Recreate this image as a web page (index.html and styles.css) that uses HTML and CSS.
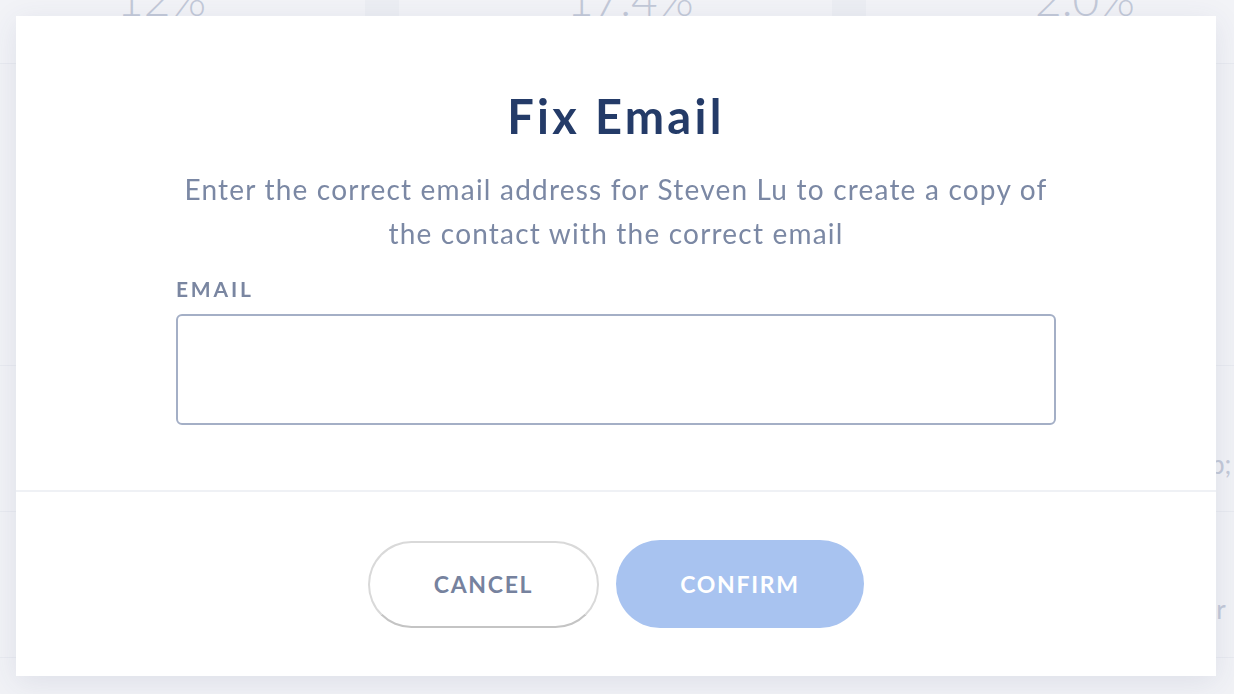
FILE: index.html
```html
<!DOCTYPE html>
<html>
<head>
<meta charset="utf-8">
<link rel="stylesheet" href="styles.css">
</head>
<body>
<div class="page">
  <div class="stats">
    <div class="stat s1">12%</div>
    <div class="stat s2">17.4%</div>
    <div class="stat s3">2.0%</div>
  </div>
  <div class="row r1"><div></div><div class="peek"></div></div>
  <div class="row r2"><div></div><div class="peek">p;</div></div>
  <div class="row r3"><div></div><div class="peek">ir</div></div>
  <div class="row r4"><div></div><div class="peek"></div></div>
</div>

<div class="modal">
  <div class="modal-body">
    <h1 class="title">Fix Email</h1>
    <p class="desc">Enter the correct email address for Steven Lu to create a copy of<br>the contact with the correct email</p>
    <div class="field">
      <label class="label">EMAIL</label>
      <input class="input" type="text">
    </div>
  </div>
  <div class="modal-footer">
    <button class="btn btn-cancel">CANCEL</button>
    <button class="btn btn-confirm">CONFIRM</button>
  </div>
</div>
</body>
</html>
```

FILE: styles.css
```css
* { box-sizing: border-box; }
html, body { margin: 0; padding: 0; }
body {
  width: 1234px;
  height: 694px;
  overflow: hidden;
  background: #f1f2f6;
  font-family: Lato, "Noto Sans", sans-serif;
}
.page { width: 1234px; }
.stats {
  display: grid;
  grid-template-columns: 365px 433px 1fr;
  column-gap: 34px;
  background: #eceef3;
  height: 64px;
  border-bottom: 1px solid #e8eaf0;
  overflow: hidden;
}
.stat {
  background: #f2f3f7;
  font-size: 46px;
  line-height: 46px;
  font-weight: 300;
  color: #c3c9d8;
  white-space: nowrap;
  margin-top: -24px;
  height: 88px;
}
.s1 { padding-left: 117px; }
.s2 { padding-left: 168px; }
.s3 { padding-left: 169px; }

.row {
  display: grid;
  grid-template-columns: 1210px 1fr;
  border-bottom: 1px solid #e8eaf0;
  align-items: center;
  overflow: hidden;
}
.r1 { height: 302px; }
.r2 { height: 146px; }
.r3 { height: 146px; }
.r4 { height: 40px; border-bottom: none; }
.peek {
  font-size: 26px;
  color: #c3c9d8;
  white-space: nowrap;
}
.r2 .peek { margin-top: 50px; }
.r3 .peek { margin-top: 48px; }

.modal {
  position: fixed;
  top: 16px;
  left: 16px;
  width: 1200px;
  height: 660px;
  background: #ffffff;
  box-shadow: 0 6px 28px rgba(60, 72, 120, 0.10);
  display: flex;
  flex-direction: column;
}
.modal-body {
  height: 476px;
  display: flex;
  flex-direction: column;
  align-items: center;
  border-bottom: 2px solid #eff1f5;
}
.title {
  margin: 73px 0 0;
  font-size: 47px;
  line-height: 54px;
  font-weight: 700;
  letter-spacing: 3.3px;
  color: #243b68;
}
.desc {
  margin: 24px 0 0;
  font-size: 28px;
  line-height: 44px;
  color: #7b88a4;
  text-align: center;
  letter-spacing: 1.2px;
}
.field {
  width: 880px;
  margin-top: 21px;
  display: flex;
  flex-direction: column;
}
.label {
  font-size: 21px;
  line-height: 26px;
  font-weight: 700;
  letter-spacing: 2.8px;
  color: #7a86a1;
}
.input {
  margin-top: 12px;
  height: 111px;
  width: 880px;
  border: 2px solid #a4afc6;
  border-radius: 6px;
  background: #fff;
  outline: none;
}
.modal-footer {
  flex: 1;
  display: flex;
  justify-content: center;
  align-items: center;
  gap: 17px;
}
.btn {
  font-family: Lato, "Noto Sans", sans-serif;
  font-size: 23px;
  font-weight: 700;
  letter-spacing: 1.7px;
  border-radius: 44px;
  cursor: pointer;
  padding: 0;
}
.btn-cancel {
  width: 231px;
  height: 87px;
  background: #fff;
  border: 2px solid #d9d9d9;
  border-bottom-color: #c4c4c4;
  color: #76829e;
}
.btn-confirm {
  width: 248px;
  height: 88px;
  background: #a8c3f0;
  border: none;
  color: #ffffff;
}
```
